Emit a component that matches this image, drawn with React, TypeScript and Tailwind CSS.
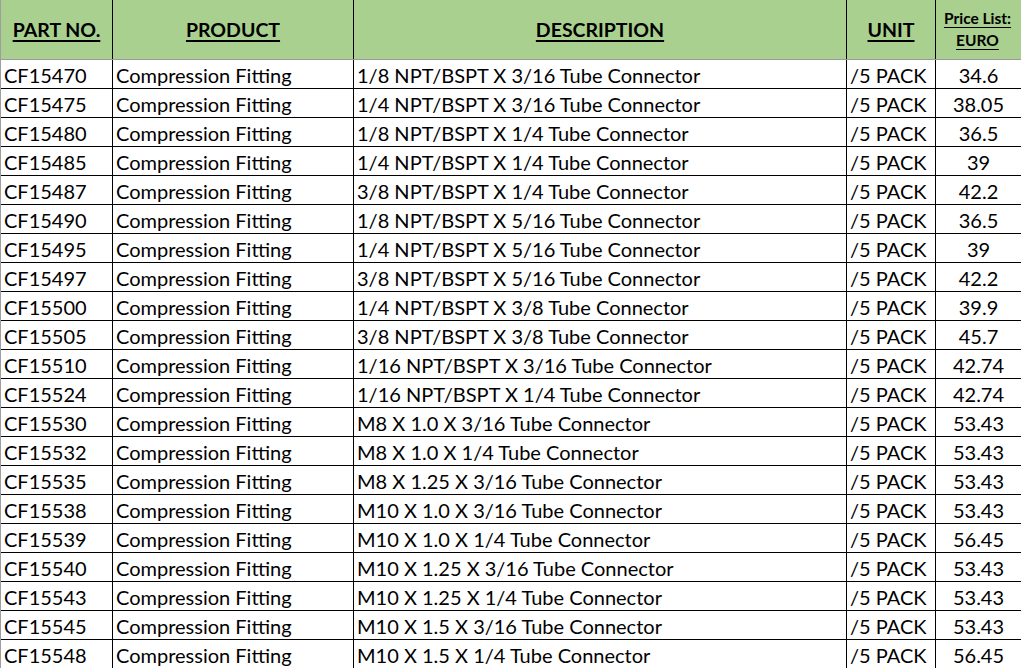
const ROWS: [string, string, string][] = [
  ["CF15470", "1/8 NPT/BSPT X 3/16 Tube Connector", "34.6"],
  ["CF15475", "1/4 NPT/BSPT X 3/16 Tube Connector", "38.05"],
  ["CF15480", "1/8 NPT/BSPT X 1/4 Tube Connector", "36.5"],
  ["CF15485", "1/4 NPT/BSPT X 1/4 Tube Connector", "39"],
  ["CF15487", "3/8 NPT/BSPT X 1/4 Tube Connector", "42.2"],
  ["CF15490", "1/8 NPT/BSPT X 5/16 Tube Connector", "36.5"],
  ["CF15495", "1/4 NPT/BSPT X 5/16 Tube Connector", "39"],
  ["CF15497", "3/8 NPT/BSPT X 5/16 Tube Connector", "42.2"],
  ["CF15500", "1/4 NPT/BSPT X 3/8 Tube Connector", "39.9"],
  ["CF15505", "3/8 NPT/BSPT X 3/8 Tube Connector", "45.7"],
  ["CF15510", "1/16 NPT/BSPT X 3/16 Tube Connector", "42.74"],
  ["CF15524", "1/16 NPT/BSPT X 1/4 Tube Connector", "42.74"],
  ["CF15530", "M8 X 1.0 X 3/16 Tube Connector", "53.43"],
  ["CF15532", "M8 X 1.0 X 1/4 Tube Connector", "53.43"],
  ["CF15535", "M8 X 1.25 X 3/16 Tube Connector", "53.43"],
  ["CF15538", "M10 X 1.0 X 3/16 Tube Connector", "53.43"],
  ["CF15539", "M10 X 1.0 X 1/4 Tube Connector", "56.45"],
  ["CF15540", "M10 X 1.25 X 3/16 Tube Connector", "53.43"],
  ["CF15543", "M10 X 1.25 X 1/4 Tube Connector", "53.43"],
  ["CF15545", "M10 X 1.5 X 3/16 Tube Connector", "53.43"],
  ["CF15548", "M10 X 1.5 X 1/4 Tube Connector", "56.45"],
];

const cols = "grid grid-cols-[112px_241px_493px_89px_85px]";
const head = "flex items-center justify-center border-r border-black font-bold underline underline-offset-[3px] decoration-[1.5px]";
const cell = "flex items-center pt-[1px] px-[3px] border-r border-black whitespace-nowrap overflow-hidden";

export default function App() {
  return (
    <div className="w-[1021px] h-[668px] overflow-hidden bg-white text-black font-['Lato',sans-serif] text-[20px] leading-none">
      <div className="border-l border-[#9e9e9e]">
        <div className={`${cols} h-[60px] bg-[#a9d08e] border-b border-[#9a9a9a] text-[19.5px]`}>
          <div className={head}>PART NO.</div>
          <div className={head}>PRODUCT</div>
          <div className={head}>DESCRIPTION</div>
          <div className={head}>UNIT</div>
          <div className="flex flex-col items-center justify-center gap-[6px] pr-[2px] text-[15.5px] font-bold underline underline-offset-[3px]">
            <span>Price List:</span>
            <span>EURO</span>
          </div>
        </div>
        {ROWS.map(([part, desc, price]) => (
          <div key={part} className={`${cols} h-[29px] border-b border-black`}>
            <div className={cell}>{part}</div>
            <div className={cell}>Compression Fitting</div>
            <div className={cell}>{desc}</div>
            <div className={cell}>/5 PACK</div>
            <div className="flex items-center justify-center pt-[1px]">{price}</div>
          </div>
        ))}
      </div>
    </div>
  );
}
